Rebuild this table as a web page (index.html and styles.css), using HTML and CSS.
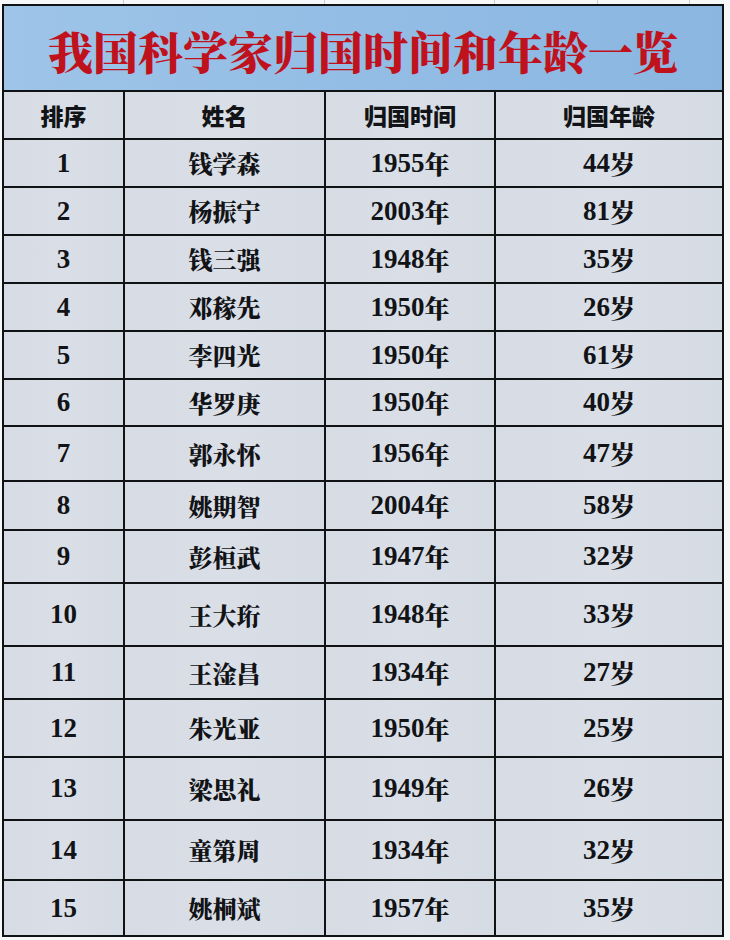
FILE: index.html
```html
<!DOCTYPE html>
<html lang="zh-CN">
<head>
<meta charset="utf-8">
<title>我国科学家归国时间和年龄一览</title>
<link rel="stylesheet" href="styles.css">
</head>
<body>
<div class="sheet-top">
  <span class="gc w1"></span><span class="gc w2"></span><span class="gc w3"></span><span class="gc w4"></span><span class="gc w5"></span><span class="gc w6"></span>
</div>
<div class="table">
  <div class="title">我国科学家归国时间和年龄一览</div>

  <div class="cell head">排序</div>
  <div class="cell head">姓名</div>
  <div class="cell head">归国时间</div>
  <div class="cell head">归国年龄</div>

  <div class="cell num">1</div><div class="cell name">钱学森</div><div class="cell num">1955<span class="cj">年</span></div><div class="cell num">44<span class="cj">岁</span></div>
  <div class="cell num">2</div><div class="cell name">杨振宁</div><div class="cell num">2003<span class="cj">年</span></div><div class="cell num">81<span class="cj">岁</span></div>
  <div class="cell num">3</div><div class="cell name">钱三强</div><div class="cell num">1948<span class="cj">年</span></div><div class="cell num">35<span class="cj">岁</span></div>
  <div class="cell num">4</div><div class="cell name">邓稼先</div><div class="cell num">1950<span class="cj">年</span></div><div class="cell num">26<span class="cj">岁</span></div>
  <div class="cell num">5</div><div class="cell name">李四光</div><div class="cell num">1950<span class="cj">年</span></div><div class="cell num">61<span class="cj">岁</span></div>
  <div class="cell num">6</div><div class="cell name">华罗庚</div><div class="cell num">1950<span class="cj">年</span></div><div class="cell num">40<span class="cj">岁</span></div>
  <div class="cell num">7</div><div class="cell name">郭永怀</div><div class="cell num">1956<span class="cj">年</span></div><div class="cell num">47<span class="cj">岁</span></div>
  <div class="cell num">8</div><div class="cell name">姚期智</div><div class="cell num">2004<span class="cj">年</span></div><div class="cell num">58<span class="cj">岁</span></div>
  <div class="cell num">9</div><div class="cell name">彭桓武</div><div class="cell num">1947<span class="cj">年</span></div><div class="cell num">32<span class="cj">岁</span></div>
  <div class="cell num">10</div><div class="cell name">王大珩</div><div class="cell num">1948<span class="cj">年</span></div><div class="cell num">33<span class="cj">岁</span></div>
  <div class="cell num">11</div><div class="cell name">王淦昌</div><div class="cell num">1934<span class="cj">年</span></div><div class="cell num">27<span class="cj">岁</span></div>
  <div class="cell num">12</div><div class="cell name">朱光亚</div><div class="cell num">1950<span class="cj">年</span></div><div class="cell num">25<span class="cj">岁</span></div>
  <div class="cell num">13</div><div class="cell name">梁思礼</div><div class="cell num">1949<span class="cj">年</span></div><div class="cell num">26<span class="cj">岁</span></div>
  <div class="cell num">14</div><div class="cell name">童第周</div><div class="cell num">1934<span class="cj">年</span></div><div class="cell num">32<span class="cj">岁</span></div>
  <div class="cell num">15</div><div class="cell name">姚桐斌</div><div class="cell num">1957<span class="cj">年</span></div><div class="cell num">35<span class="cj">岁</span></div>
</div>
</body>
</html>
```
FILE: styles.css
```css
html, body {
  margin: 0;
  padding: 0;
  background: #f6f7f9;
}
body {
  width: 730px;
  height: 940px;
  overflow: hidden;
  padding-left: 2px;
  box-sizing: border-box;
}
.sheet-top {
  display: flex;
  height: 4px;
}
.gc {
  display: block;
  height: 4px;
  border-right: 1px solid #c9ccd2;
  box-sizing: border-box;
}
.w1 { width: 122px; }
.w2 { width: 201px; }
.w3 { width: 170px; }
.w4 { width: 103px; }
.w5 { width: 92px; }
.w6 { width: 34px; border-right: none; }

.table {
  display: grid;
  width: 722px;
  box-sizing: border-box;
  padding: 2px;
  gap: 2px;
  background: #111214;
  grid-template-columns: 119px 199px 168px 226px;
  grid-template-rows: 84px 46px 46px 46px 46px 46px 46px 45px 53px 47px 51px 61px 51px 56px 61px 58px 54px;
}
.title {
  grid-column: 1 / -1;
  display: flex;
  align-items: center;
  justify-content: center;
  background: linear-gradient(90deg, #9ec4e8 0%, #93bde5 50%, #8ab6e0 100%);
  color: #c0121d;
  font-family: "Noto Serif CJK SC", "Noto Sans CJK SC", serif;
  font-weight: 900;
  font-size: 45px;
  line-height: 1;
  padding-top: 4px;
  box-sizing: border-box;
}
.cell {
  display: flex;
  align-items: center;
  justify-content: center;
  background: linear-gradient(90deg, #d7dce4 0%, #dadfe7 50%, #d5dbe3 100%);
  color: #121316;
  line-height: 1;
}
.head {
  font-family: "Noto Sans CJK SC", sans-serif;
  font-weight: 900;
  font-size: 23px;
}
.name {
  font-family: "Noto Serif CJK SC", "Noto Sans CJK SC", serif;
  font-weight: 900;
  font-size: 24px;
}
.num {
  font-family: "Liberation Serif", "Noto Sans CJK SC", serif;
  font-weight: 700;
  font-size: 27px;
}
.cj {
  font-family: "Noto Serif CJK SC", "Noto Sans CJK SC", serif;
  font-weight: 900;
  font-size: 25px;
}
```
